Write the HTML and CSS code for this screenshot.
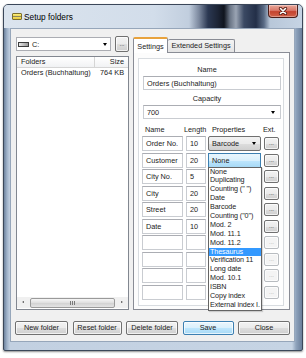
FILE: index.html
```html
<!DOCTYPE html>
<html lang="en">
<head>
    <meta charset="UTF-8">
    <title>Setup folders</title>
    <link rel="stylesheet" href="styles.css">
</head>
<body>
<div class="window">
    <div class="titlebar">
        <span class="app-icon"></span>
        <span class="title">Setup folders</span>
        <span class="close-btn">
            <svg width="10" height="8" viewBox="0 0 10 8">
                <path d="M2.5 1.5 L7.5 6.5 M7.5 1.5 L2.5 6.5" stroke="#5a1f16" stroke-width="3.2" stroke-linecap="round"/>
                <path d="M2.5 1.5 L7.5 6.5 M7.5 1.5 L2.5 6.5" stroke="#fff" stroke-width="1.6" stroke-linecap="round"/>
            </svg>
        </span>
    </div>
    <div class="client">
        <div class="main">
            <!-- folder list -->
            <div class="left">
                <div class="drive-row">
                    <div class="drive-combo">
                        <span class="drive-icon"></span>
                        <span class="drive-name">C:</span>
                        <span class="arrow"></span>
                    </div>
                    <span class="btn dots-btn">...</span>
                </div>
                <div class="listview">
                    <div class="lv-head">
                        <span class="col-folder">Folders</span>
                        <span class="col-size">Size</span>
                    </div>
                    <div class="lv-row">
                        <span class="col-folder">Orders (Buchhaltung)</span>
                        <span class="col-size">764 KB</span>
                    </div>
                    <div class="hscroll">
                        <span class="sc-arrow sc-left"></span>
                        <span class="sc-thumb"><span class="grip"></span></span>
                        <span class="sc-arrow sc-right"></span>
                    </div>
                </div>
            </div>

            <!-- settings tabs -->
            <div class="tabs">
                <div class="tab-head">
                    <span class="tab active">Settings</span>
                    <span class="tab">Extended Settings</span>
                </div>
                <div class="tab-panel">
                    <div class="group">
                        <div class="caption">Name</div>
                        <div class="textbox wide">Orders (Buchhaltung)</div>
                        <div class="caption">Capacity</div>
                        <div class="textbox wide">700<span class="arrow"></span></div>

                        <div class="fields head">
                            <span class="h-name">Name</span>
                            <span class="h-len">Length</span>
                            <span class="h-prop">Properties</span>
                            <span class="h-ext">Ext.</span>
                        </div>
                        <div class="fields">
                            <div class="textbox">Order No.</div>
                            <div class="textbox">10</div>
                            <div class="prop-combo">Barcode<span class="arrow"></span></div>
                            <span class="btn ext">...</span>

                            <div class="textbox">Customer</div>
                            <div class="textbox">20</div>
                            <div class="prop-open">
                                <div class="prop-combo focus">None</div>
                                <ul class="droplist">
                                    <li>None</li>
                                    <li>Duplicating</li>
                                    <li>Counting (" ")</li>
                                    <li>Date</li>
                                    <li>Barcode</li>
                                    <li>Counting ("0")</li>
                                    <li>Mod. 2</li>
                                    <li>Mod. 11.1</li>
                                    <li>Mod. 11.2</li>
                                    <li class="sel">Thesaurus</li>
                                    <li>Verification 11</li>
                                    <li>Long date</li>
                                    <li>Mod. 10.1</li>
                                    <li>ISBN</li>
                                    <li>Copy index</li>
                                    <li>External index I.</li>
                                </ul>
                            </div>
                            <span class="btn ext">...</span>

                            <div class="textbox">City No.</div>
                            <div class="textbox">5</div>
                            <div></div>
                            <span class="btn ext">...</span>

                            <div class="textbox">City</div>
                            <div class="textbox">20</div>
                            <div></div>
                            <span class="btn ext">...</span>

                            <div class="textbox">Street</div>
                            <div class="textbox">20</div>
                            <div></div>
                            <span class="btn ext">...</span>

                            <div class="textbox">Date</div>
                            <div class="textbox">10</div>
                            <div></div>
                            <span class="btn ext">...</span>

                            <div class="textbox"></div>
                            <div class="textbox"></div>
                            <div></div>
                            <span class="btn ext disabled">...</span>

                            <div class="textbox"></div>
                            <div class="textbox"></div>
                            <div></div>
                            <span class="btn ext disabled">...</span>

                            <div class="textbox"></div>
                            <div class="textbox"></div>
                            <div></div>
                            <span class="btn ext disabled">...</span>

                            <div class="textbox"></div>
                            <div class="textbox"></div>
                            <div></div>
                            <span class="btn ext disabled">...</span>
                        </div>
                    </div>
                </div>
            </div>
        </div>

        <div class="buttons">
            <span class="btn b-new">New folder</span>
            <span class="btn b-reset">Reset folder</span>
            <span class="btn b-delete">Delete folder</span>
            <span class="btn b-save">Save</span>
            <span class="btn b-close">Close</span>
        </div>
    </div>
</div>
</body>
</html>
```

FILE: styles.css
```css
* {
    margin: 0;
    padding: 0;
    box-sizing: border-box;
    list-style: none;
}

body {
    width: 306px;
    height: 358px;
    overflow: hidden;
    background: #fff;
    font-family: "Liberation Sans", Arial, sans-serif;
    font-size: 7.3px;
    color: #1b1b1b;
}

/* window frame */
.window {
    width: 300px;
    height: 347px;
    margin: 4px 0 0 3px;
    padding: 0 7px 8px 6px;
    display: flex;
    flex-direction: column;
    border: 1px solid #3b4759;
    border-radius: 5px 5px 2px 2px;
    background: linear-gradient(to right, #6e839e 0, #9fb2c9 3px, #c2d0e1 6px, #c6d4e4 288px, #8fa3bc 292px, #6a7f9b 298px);
    box-shadow: 0 1px 2px rgba(0, 0, 0, .45);
}

.titlebar {
    height: 23px;
    margin: 0 -7px 0 -6px;
    padding-left: 8px;
    display: flex;
    align-items: center;
    border-radius: 4px 4px 0 0;
    background: linear-gradient(to right, #dbe4ee 0, #d2ddea 150px, #c1cede 185px, #7b889e 195px, #2b3852 204px, #1c2435 214px, #0f141e 220px, #6a7586 226px, #9aa4b3 232px, #3b4963 240px, #232f48 252px, #5a6b85 260px, #b8c7d9 266px, #c6d4e4 298px);
}

.app-icon {
    width: 10px;
    height: 7px;
    border: 1px solid #7d6f2a;
    border-radius: 1px;
    background: linear-gradient(#fbef86 0, #f0d84a 40%, #8c8660 45%, #8c8660 60%, #f2dc5a 65%, #e8c93a 100%);
}

.title {
    margin-left: 2px;
    font-size: 8.3px;
    color: #000;
}

.close-btn {
    width: 30px;
    height: 13px;
    margin: 0 4px 0 auto;
    align-self: flex-start;
    display: flex;
    align-items: center;
    justify-content: center;
    border: 1px solid #4b1e1a;
    border-top: 0;
    border-radius: 0 0 4px 4px;
    background: linear-gradient(#e9a99b 0, #d9786a 45%, #c4432f 55%, #d1624a 100%);
    box-shadow: inset 0 0 0 1px rgba(255, 255, 255, .35);
}

/* client area */
.client {
    flex: 1;
    display: flex;
    flex-direction: column;
    padding: 7px 4px 6px 5px;
    border: 1px solid #96a6ba;
    background: #f0f0f0;
}

.main {
    flex: 1;
    display: flex;
    gap: 4px;
}

.left {
    width: 113px;
    display: flex;
    flex-direction: column;
}

.drive-row {
    height: 16px;
    display: flex;
    align-items: center;
    gap: 4px;
}

.drive-combo {
    width: 95px;
    height: 14px;
    display: flex;
    align-items: center;
    padding: 0 3px 0 1px;
    border: 1px solid #abadb3;
    background: #fff;
}

.drive-icon {
    width: 11px;
    height: 5px;
    border: 1px solid #3c3c3c;
    background: linear-gradient(to right, #e8e8e8, #9a9a9a);
}

.drive-name {
    margin-left: 3px;
}

.arrow {
    width: 0;
    height: 0;
    margin-left: auto;
    border-left: 2.5px solid transparent;
    border-right: 2.5px solid transparent;
    border-top: 3px solid #000;
}

.btn {
    display: block;
    text-align: center;
    border: 1px solid #707070;
    border-radius: 2px;
    background: linear-gradient(#f2f2f2 0, #ebebeb 50%, #dddddd 51%, #cfcfcf 100%);
    box-shadow: inset 0 0 0 1px rgba(255, 255, 255, .7);
    color: #1b1b1b;
}

.dots-btn {
    width: 14px;
    height: 16px;
    line-height: 15px;
    font-size: 6px;
}

.listview {
    flex: 1;
    margin-top: 4px;
    display: flex;
    flex-direction: column;
    border: 1px solid #828790;
    background: #fff;
}

.lv-head {
    height: 11px;
    display: flex;
    line-height: 10px;
    border-bottom: 1px solid #d5d5d5;
    background: linear-gradient(#fff, #f1f2f4);
}

.lv-row {
    height: 9px;
    display: flex;
    line-height: 9px;
}

.col-folder {
    width: 78px;
    padding-left: 4px;
    white-space: nowrap;
}

.lv-head .col-folder {
    border-right: 1px solid #d5d5d5;
}

.col-size {
    width: 31px;
    padding-right: 2px;
    text-align: right;
}

.hscroll {
    height: 11px;
    margin-top: auto;
    margin-bottom: 1px;
    display: flex;
    align-items: center;
    background: #f0f0f0;
}

.sc-arrow {
    width: 12px;
    height: 11px;
    position: relative;
}

.sc-arrow::after {
    content: "";
    position: absolute;
    top: 4px;
    left: 5px;
    border-top: 1.5px solid transparent;
    border-bottom: 1.5px solid transparent;
}

.sc-left::after {
    border-right: 2px solid #4a4a4a;
}

.sc-right::after {
    border-left: 2px solid #4a4a4a;
}

.sc-thumb {
    flex: 1;
    height: 10px;
    margin: 0 1px;
    display: flex;
    align-items: center;
    justify-content: center;
    border: 1px solid #9a9a9a;
    border-radius: 2px;
    background: linear-gradient(#f6f6f6, #dedede 50%, #d2d2d2 51%, #e4e4e4);
}

.grip {
    width: 5px;
    height: 4px;
    background: repeating-linear-gradient(to right, #7a7a7a 0, #7a7a7a 1px, transparent 1px, transparent 2px);
}

/* tabs */
.tabs {
    width: 157px;
    margin-top: 1px;
    display: flex;
    flex-direction: column;
}

.tab-head {
    height: 15px;
    display: flex;
    align-items: flex-end;
}

.tab {
    height: 13px;
    line-height: 12px;
    text-align: center;
    border: 1px solid #898c95;
    border-bottom: 0;
    border-radius: 2px 2px 0 0;
    background: linear-gradient(#f4f4f4, #e4e4e4);
}

.tab:nth-child(2) {
    width: 67px;
    border-left: 0;
}

.tab.active {
    width: 35px;
    height: 16px;
    line-height: 15px;
    margin-bottom: -1px;
    position: relative;
    z-index: 1;
    border-top: 2px solid #e8a23c;
    background: #fff;
}

.tab-panel {
    flex: 1;
    display: flex;
    padding: 5px 5px 3px 4px;
    border: 1px solid #898c95;
    background: #fcfcfc;
}

.group {
    flex: 1;
    border: 1px solid #d8dce0;
    background: #fff;
}

.caption {
    margin-top: 4px;
    padding-right: 8px;
    line-height: 10px;
    text-align: center;
}

.group > .caption:first-child {
    margin-top: 6px;
}

.textbox {
    height: 15px;
    padding: 0 3px;
    display: flex;
    align-items: center;
    white-space: nowrap;
    border: 1px solid #c9ccd1;
    border-top-color: #abadb3;
    background: #fff;
}

.textbox.wide {
    height: 14px;
    margin: 1px 2px 0 4px;
}

.textbox.wide .arrow {
    margin-right: 2px;
}

.fields {
    margin: 1px 0 0 3px;
    display: grid;
    grid-template-columns: 44px 22px 56px 15px;
    grid-auto-rows: 15px;
    row-gap: 1.5px;
}

.fields.head {
    margin-top: 6px;
    grid-auto-rows: 10px;
    line-height: 10px;
}

.h-name {
    padding-left: 3px;
}

.h-len {
    margin-left: -2px;
}

.h-prop {
    padding-left: 4px;
}

.h-ext {
    margin-left: -1px;
}

.fields .textbox:nth-child(4n+1) {
    width: 41px;
}

.fields .textbox:nth-child(4n+2) {
    width: 20px;
}

.prop-combo {
    width: 53px;
    height: 15px;
    padding: 0 4px 0 3px;
    display: flex;
    align-items: center;
    border: 1px solid #707070;
    border-radius: 2px;
    background: linear-gradient(#f2f2f2 0, #ebebeb 50%, #dddddd 51%, #cfcfcf 100%);
}

.prop-combo.focus {
    border-color: #3c7fb1;
    border-radius: 0;
    background: linear-gradient(#eaf6fd 0, #d9f0fc 50%, #bee6fd 51%, #a7d9f5 100%);
}

.prop-open {
    position: relative;
    z-index: 2;
}

.droplist {
    position: absolute;
    top: 14px;
    left: 0;
    width: 54px;
    border: 1px solid #646464;
    background: #fff;
    font-size: 7.2px;
    line-height: 8.9px;
    letter-spacing: -0.1px;
    white-space: nowrap;
    box-shadow: 1px 1px 1px rgba(0, 0, 0, .15);
}

.droplist li {
    height: 8.9px;
    padding-left: 1px;
}

.droplist li.sel {
    background: #3399ff;
    color: #fff;
}

.ext {
    width: 15px;
    height: 13px;
    align-self: center;
    line-height: 10px;
    font-size: 6px;
}

.ext.disabled {
    border-color: #b8bcc0;
    background: #f4f4f4;
    color: #a8a8a8;
}

/* bottom buttons */
.buttons {
    height: 14px;
    margin: 11px 0 0 -1px;
    display: flex;
    justify-content: space-between;
}

.buttons .btn {
    height: 14px;
    line-height: 12px;
}

.b-new {
    width: 53px;
}

.b-reset {
    width: 49px;
}

.b-delete {
    width: 52px;
}

.b-save {
    width: 51px;
    border-color: #3c7fb1;
    background: linear-gradient(#eaf6fd 0, #d9f0fc 50%, #bee6fd 51%, #a7d9f5 100%);
}

.b-close {
    width: 52px;
}
```
